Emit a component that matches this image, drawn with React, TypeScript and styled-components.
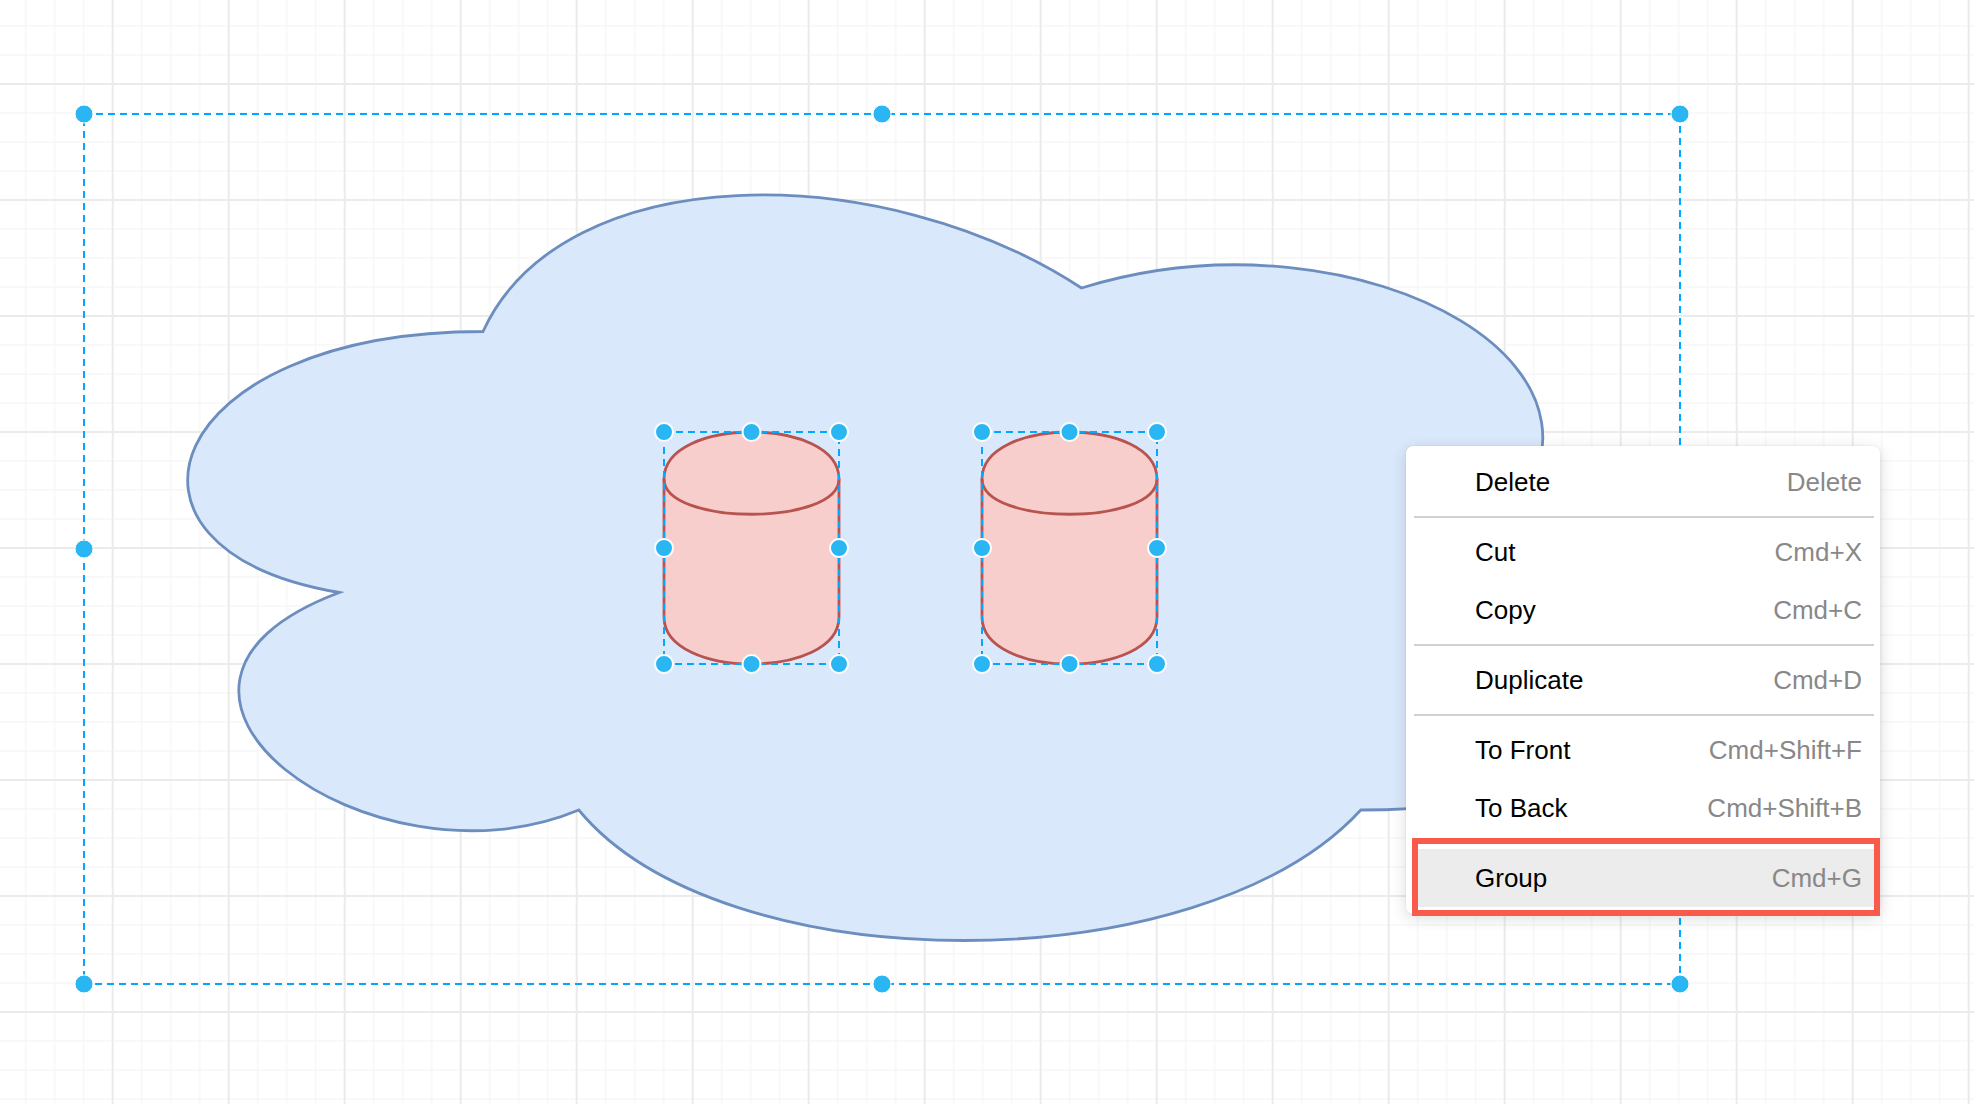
import React from 'react';
import styled, { createGlobalStyle } from 'styled-components';

const GlobalStyle = createGlobalStyle`
  html, body {
    margin: 0;
    padding: 0;
    background: #fff;
    overflow: hidden;
  }
  body {
    font-family: "Liberation Sans", Arial, Helvetica, sans-serif;
  }
`;

const Canvas = styled.div`
  position: relative;
  width: 1974px;
  height: 1104px;
  overflow: hidden;
  background: #fff;
`;

const Drawing = styled.svg`
  position: absolute;
  inset: 0;
  display: block;
`;

const Menu = styled.div`
  position: absolute;
  left: 1406px;
  top: 446px;
  width: 474px;
  box-sizing: border-box;
  padding: 7px 6px 7px 8px;
  background: #fff;
  border-radius: 7px;
  box-shadow: 0 0 2px rgba(0, 0, 0, 0.12), 0 4px 16px rgba(0, 0, 0, 0.14);
  font-family: "Liberation Sans", Arial, Helvetica, sans-serif;
  font-size: 26px;
  line-height: 1;
`;

const Item = styled.div<{ $active?: boolean }>`
  display: flex;
  align-items: center;
  justify-content: space-between;
  height: 58px;
  padding: 0 12px 0 ${(p) => (p.$active ? 57 : 61)}px;
  margin-left: ${(p) => (p.$active ? 4 : 0)}px;
  background: ${(p) => (p.$active ? '#ececec' : 'transparent')};
`;

const Label = styled.span`
  color: #000;
`;

const Shortcut = styled.span`
  color: #888;
`;

const Separator = styled.div`
  height: 2px;
  margin: 5px 0;
  background: #d0d0d0;
`;

const Callout = styled.div`
  position: absolute;
  left: 6px;
  top: 392px;
  width: 468px;
  height: 78px;
  box-sizing: border-box;
  border: 6px solid #fa5a4c;
  pointer-events: none;
`;

const SEL = '#00a8ff';
const HANDLE = '#29b6f2';

// group bounds
const G = { x: 84, y: 114, w: 1596, h: 870 };

function cloudPath(x: number, y: number, w: number, h: number) {
  const X = (f: number) => x + w * f;
  const Y = (f: number) => y + h * f;
  return [
    `M ${X(0.25)} ${Y(0.25)}`,
    `C ${X(0.05)} ${Y(0.25)} ${X(0)} ${Y(0.5)} ${X(0.16)} ${Y(0.55)}`,
    `C ${X(0)} ${Y(0.66)} ${X(0.18)} ${Y(0.9)} ${X(0.31)} ${Y(0.8)}`,
    `C ${X(0.4)} ${Y(1)} ${X(0.7)} ${Y(1)} ${X(0.8)} ${Y(0.8)}`,
    `C ${X(1)} ${Y(0.8)} ${X(1)} ${Y(0.6)} ${X(0.875)} ${Y(0.5)}`,
    `C ${X(1)} ${Y(0.3)} ${X(0.8)} ${Y(0.1)} ${X(0.625)} ${Y(0.2)}`,
    `C ${X(0.5)} ${Y(0.05)} ${X(0.3)} ${Y(0.05)} ${X(0.25)} ${Y(0.25)}`,
    'Z',
  ].join(' ');
}

function Handles({ x, y, w, h, ring }: { x: number; y: number; w: number; h: number; ring?: boolean }) {
  const pts = [
    [x, y], [x + w / 2, y], [x + w, y],
    [x, y + h / 2], [x + w, y + h / 2],
    [x, y + h], [x + w / 2, y + h], [x + w, y + h],
  ];
  return (
    <g>
      {pts.map(([cx, cy], i) => (
        <circle key={i} cx={cx} cy={cy} r={9} fill={HANDLE} stroke="#fff" strokeWidth={ring ? 2 : 1} />
      ))}
    </g>
  );
}

function Cylinder({ x, y }: { x: number; y: number }) {
  const w = 175;
  const h = 232;
  const dy = 47;
  const body = `M ${x} ${y + dy} C ${x} ${y - dy / 3} ${x + w} ${y - dy / 3} ${x + w} ${y + dy} L ${x + w} ${y + h - dy} C ${x + w} ${y + h + dy / 3} ${x} ${y + h + dy / 3} ${x} ${y + h - dy} Z`;
  const lid = `M ${x} ${y + dy} C ${x} ${y + 2 * dy} ${x + w} ${y + 2 * dy} ${x + w} ${y + dy}`;
  return (
    <g>
      <path d={body} fill="#f8cecc" stroke="#b85450" strokeWidth={2.8} />
      <path d={lid} fill="none" stroke="#b85450" strokeWidth={2.8} />
      <rect x={x} y={y} width={w} height={h} fill="none" stroke={SEL} strokeWidth={2} strokeDasharray="7 5" />
      <Handles x={x} y={y} w={w} h={h} ring />
    </g>
  );
}

const items = [
  { label: 'Delete', key: 'Delete', sep: true },
  { label: 'Cut', key: 'Cmd+X' },
  { label: 'Copy', key: 'Cmd+C', sep: true },
  { label: 'Duplicate', key: 'Cmd+D', sep: true },
  { label: 'To Front', key: 'Cmd+Shift+F' },
  { label: 'To Back', key: 'Cmd+Shift+B', sep: true },
  { label: 'Group', key: 'Cmd+G', active: true },
];

export default function App() {
  return (
    <>
      <GlobalStyle />
      <Canvas>
        <Drawing width={1974} height={1104} viewBox="0 0 1974 1104">
          <defs>
            <pattern id="grid" x={-4.3} y={-33} width={116} height={116} patternUnits="userSpaceOnUse">
              {[29.5, 58.5, 87.5].map((p) => (
                <React.Fragment key={p}>
                  <rect x={p} y={0} width={1} height={116} fill="#f3f3f3" />
                  <rect x={0} y={p} width={116} height={1} fill="#f3f3f3" />
                </React.Fragment>
              ))}
              <rect x={0} y={0} width={2} height={116} fill="#ebebeb" />
              <rect x={0} y={0} width={116} height={2} fill="#ebebeb" />
            </pattern>
          </defs>
          <rect width={1974} height={1104} fill="url(#grid)" />

          <path d={cloudPath(G.x, G.y, G.w, G.h)} fill="#dae8fc" stroke="#6c8ebf" strokeWidth={2.8} />

          <rect x={G.x} y={G.y} width={G.w} height={G.h} fill="none" stroke={SEL} strokeWidth={2} strokeDasharray="7 5" />
          <Handles x={G.x} y={G.y} w={G.w} h={G.h} />

          <Cylinder x={664} y={432} />
          <Cylinder x={982} y={432} />
        </Drawing>

        <Menu>
          {items.map((it) => (
            <React.Fragment key={it.label}>
              <Item $active={it.active}>
                <Label>{it.label}</Label>
                <Shortcut>{it.key}</Shortcut>
              </Item>
              {it.sep && <Separator />}
            </React.Fragment>
          ))}
          <Callout />
        </Menu>
      </Canvas>
    </>
  );
}
